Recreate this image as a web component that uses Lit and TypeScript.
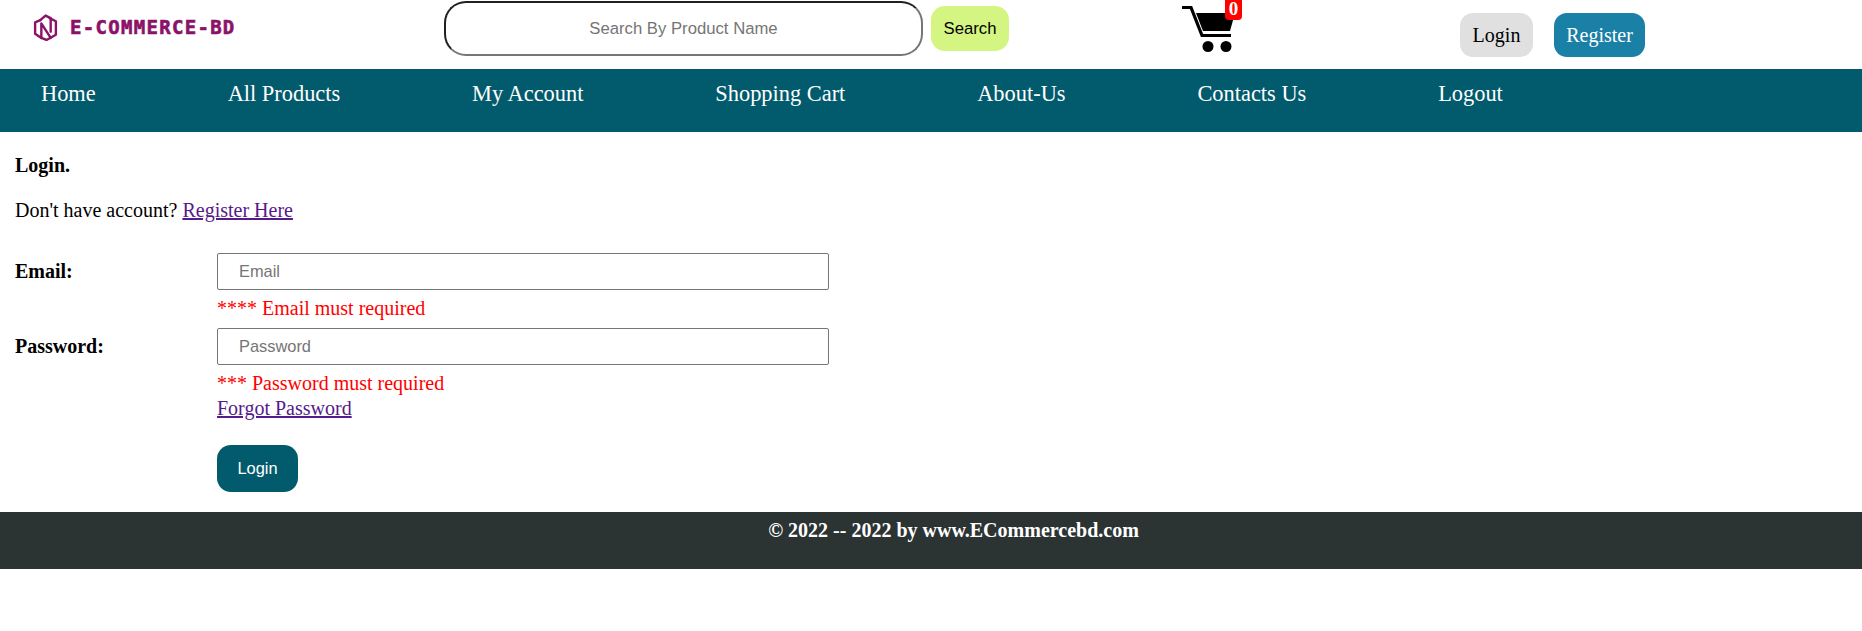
import { LitElement, html, css } from "lit";
import { customElement } from "lit/decorators.js";

@customElement("app-root")
export class AppRoot extends LitElement {
  static styles = css`
    :host { display: block; font-family: "Liberation Serif", serif; font-size: 20px; color: #000; background: #fff; }
    .header { display: flex; align-items: flex-start; height: 69px; }
    .logo { display: flex; align-items: center; gap: 12px; width: 444px; height: 54px; padding: 0 0 0 33px; box-sizing: border-box; flex: none; }
    .logo svg { width: 25px; height: 27px; flex: none; }
    .logo-text { font-family: "DejaVu Sans Mono", monospace; font-weight: 700; font-size: 19px; color: #8b1268; letter-spacing: 1.3px; white-space: nowrap; -webkit-text-stroke: 0.6px #8b1268; }
    .search-input { width: 479px; height: 55px; margin-top: 1px; box-sizing: border-box; border: 2px inset #767676; border-radius: 22px; font: 16.7px "Liberation Sans", sans-serif; text-align: center; background: #fff; padding: 0; flex: none; }
    .search-input::placeholder, .field input::placeholder { color: #757575; opacity: 1; }
    .search-btn { width: 78px; height: 45px; margin: 6px 0 0 8px; border: 0; border-radius: 14px; background: #d4f582; color: #000; font: 16.7px "Liberation Sans", sans-serif; padding: 0; flex: none; }
    .cart { position: relative; width: 60px; height: 56px; margin-left: 173px; flex: none; }
    .cart svg { display: block; width: 54px; height: 47px; margin-top: 6px; }
    .badge { position: absolute; left: 43px; top: 0; width: 17px; height: 20px; background: #f00; color: #fff; font-weight: 700; font-size: 19px; line-height: 17px; text-align: center; border-radius: 0 0 4px 4px; }
    .auth { display: flex; gap: 21px; margin: 13px 0 0 218px; }
    .auth button { height: 44px; border: 0; border-radius: 13px; font: 20px "Liberation Serif", serif; padding: 0; }
    .auth .login { width: 73px; background: #e0e0e0; color: #000; }
    .auth .register { width: 91px; background: #1a80a6; color: #fff; }
    .nav { display: flex; gap: 131.9px; height: 63px; padding: 12px 0 0 41px; box-sizing: border-box; background: #025a6d; color: #fff; font-size: 22.4px; line-height: 26px; }
    .nav a { color: inherit; text-decoration: none; white-space: nowrap; }
    .main { padding: 22px 0 20px 15px; }
    .title { font-weight: 700; line-height: 22px; }
    .intro { line-height: 23px; margin-top: 23px; }
    a.link { color: #551a8b; text-decoration: underline; }
    .form { display: grid; grid-template-columns: 202px 612px; margin-top: 31px; }
    .form label { font-weight: 700; line-height: 36px; }
    .field input { display: block; width: 100%; height: 37px; box-sizing: border-box; border: 1px solid #767676; border-radius: 2px; padding: 0 0 0 21px; font: 16.4px "Liberation Sans", sans-serif; background: #fff; }
    .error { color: #f00; line-height: 23px; margin-top: 7px; }
    .email-field { padding-bottom: 8px; }
    .forgot { display: block; line-height: 23px; margin-top: 2px; }
    .submit { display: block; width: 81px; height: 47px; margin-top: 25px; border: 0; border-radius: 14px; background: #025a6d; color: #fff; font: 16.4px "Liberation Sans", sans-serif; padding: 0; }
    .footer { height: 57px; background: #2c3333; color: #fff; font-weight: 700; text-align: center; line-height: 23px; padding: 7px 0 0 45px; box-sizing: border-box; }
  `;

  render() {
    const nav = ["Home", "All Products", "My Account", "Shopping Cart", "About-Us", "Contacts Us", "Logout"];
    return html`
      <div class="header">
        <div class="logo">
          <svg viewBox="0 0 24 26" fill="none" stroke="#8b1268" stroke-width="2.300" stroke-linejoin="round" stroke-linecap="round">
            <path d="M7 6 2 8V19l6 4V9l9 14"/>
            <path d="M8 23l5 2 9-5V7l-6-3"/>
            <path d="M7 6l5-4.500 5 2.500v13"/>
          </svg>
          <span class="logo-text">E-COMMERCE-BD</span>
        </div>
        <input class="search-input" placeholder="Search By Product Name" />
        <button class="search-btn">Search</button>
        <div class="cart">
          <svg viewBox="0 0 54 47">
            <path d="M0 1.500h9l11 28h29" fill="none" stroke="#000" stroke-width="3.200"/>
            <path d="M14 7h39l-5 18H21z" fill="#000"/>
            <circle cx="26" cy="40.500" r="5.500" fill="#000"/>
            <circle cx="44" cy="40.500" r="5.500" fill="#000"/>
          </svg>
          <span class="badge">0</span>
        </div>
        <div class="auth">
          <button class="login">Login</button>
          <button class="register">Register</button>
        </div>
      </div>
      <nav class="nav">${nav.map((n) => html`<a href="#">${n}</a>`)}</nav>
      <div class="main">
        <div class="title">Login.</div>
        <div class="intro">Don't have account? <a class="link" href="#">Register Here</a></div>
        <div class="form">
          <label>Email:</label>
          <div class="field email-field">
            <input placeholder="Email" />
            <div class="error">**** Email must required</div>
          </div>
          <label>Password:</label>
          <div class="field">
            <input placeholder="Password" />
            <div class="error">*** Password must required</div>
            <a class="link forgot" href="#">Forgot Password</a>
            <button class="submit">Login</button>
          </div>
        </div>
      </div>
      <div class="footer">© 2022 -- 2022 by www.ECommercebd.com</div>
    `;
  }
}
